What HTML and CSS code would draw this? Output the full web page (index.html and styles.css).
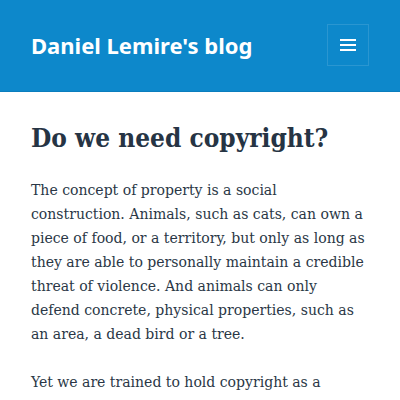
FILE: index.html
```html
<!DOCTYPE html>
<html>
<head>
<meta charset="utf-8">
<link rel="stylesheet" href="styles.css">
</head>
<body>
<header class="site-header">
  <div class="site-title">Daniel Lemire's blog</div>
  <button class="menu-toggle" aria-label="Menu">
    <svg width="16" height="12" viewBox="0 0 16 12"><rect x="0" y="0" width="16" height="2" fill="#fff"/><rect x="0" y="5" width="16" height="2" fill="#fff"/><rect x="0" y="10" width="16" height="2" fill="#fff"/></svg>
  </button>
</header>
<main class="content">
  <h1 class="entry-title">Do we need copyright?</h1>
  <p>The concept of property is a social construction. Animals, such as cats, can own a piece of food, or a territory, but only as long as they are able to personally maintain a credible threat of violence. And animals can only defend concrete, physical properties, such as an area, a dead bird or a tree.</p>
  <p>Yet we are trained to hold copyright as a natural right, as absolutely fair.</p>
</main>
</body>
</html>
```
FILE: styles.css
```css
html, body { margin: 0; padding: 0; background: #fff; }
body { font-family: "DejaVu Serif Condensed", "DejaVu Serif", serif; font-stretch: semi-condensed; color: #2a3746; }
.site-header {
  background: #0d88cb;
  border-bottom: 1px solid #0a7dbd;
  height: 92px;
  box-sizing: border-box;
  display: flex;
  align-items: center;
  justify-content: space-between;
  padding: 0 31px 0 31px;
}
.site-title {
  font-family: "Noto Sans", sans-serif;
  font-weight: bold;
  font-size: 22px;
  color: #fff;
  margin-top: -2px;
}
.menu-toggle {
  width: 42px;
  height: 42px;
  background: transparent;
  border: 1px solid rgba(255,255,255,0.12);
  padding: 0;
  display: flex;
  align-items: center;
  justify-content: center;
  margin-top: -2px;
}
.menu-toggle svg { display: block; }
.content { padding: 28px 31px 0 31px; }
.entry-title {
  font-family: "DejaVu Serif Condensed", "DejaVu Serif", serif;
  font-stretch: semi-condensed;
  font-weight: bold;
  font-size: 26px;
  line-height: 36px;
  margin: 0 0 22px 0;
  color: #263444;
}
p {
  font-size: 15.6px;
  line-height: 24px;
  margin: 0 0 24px 0;
}
```
